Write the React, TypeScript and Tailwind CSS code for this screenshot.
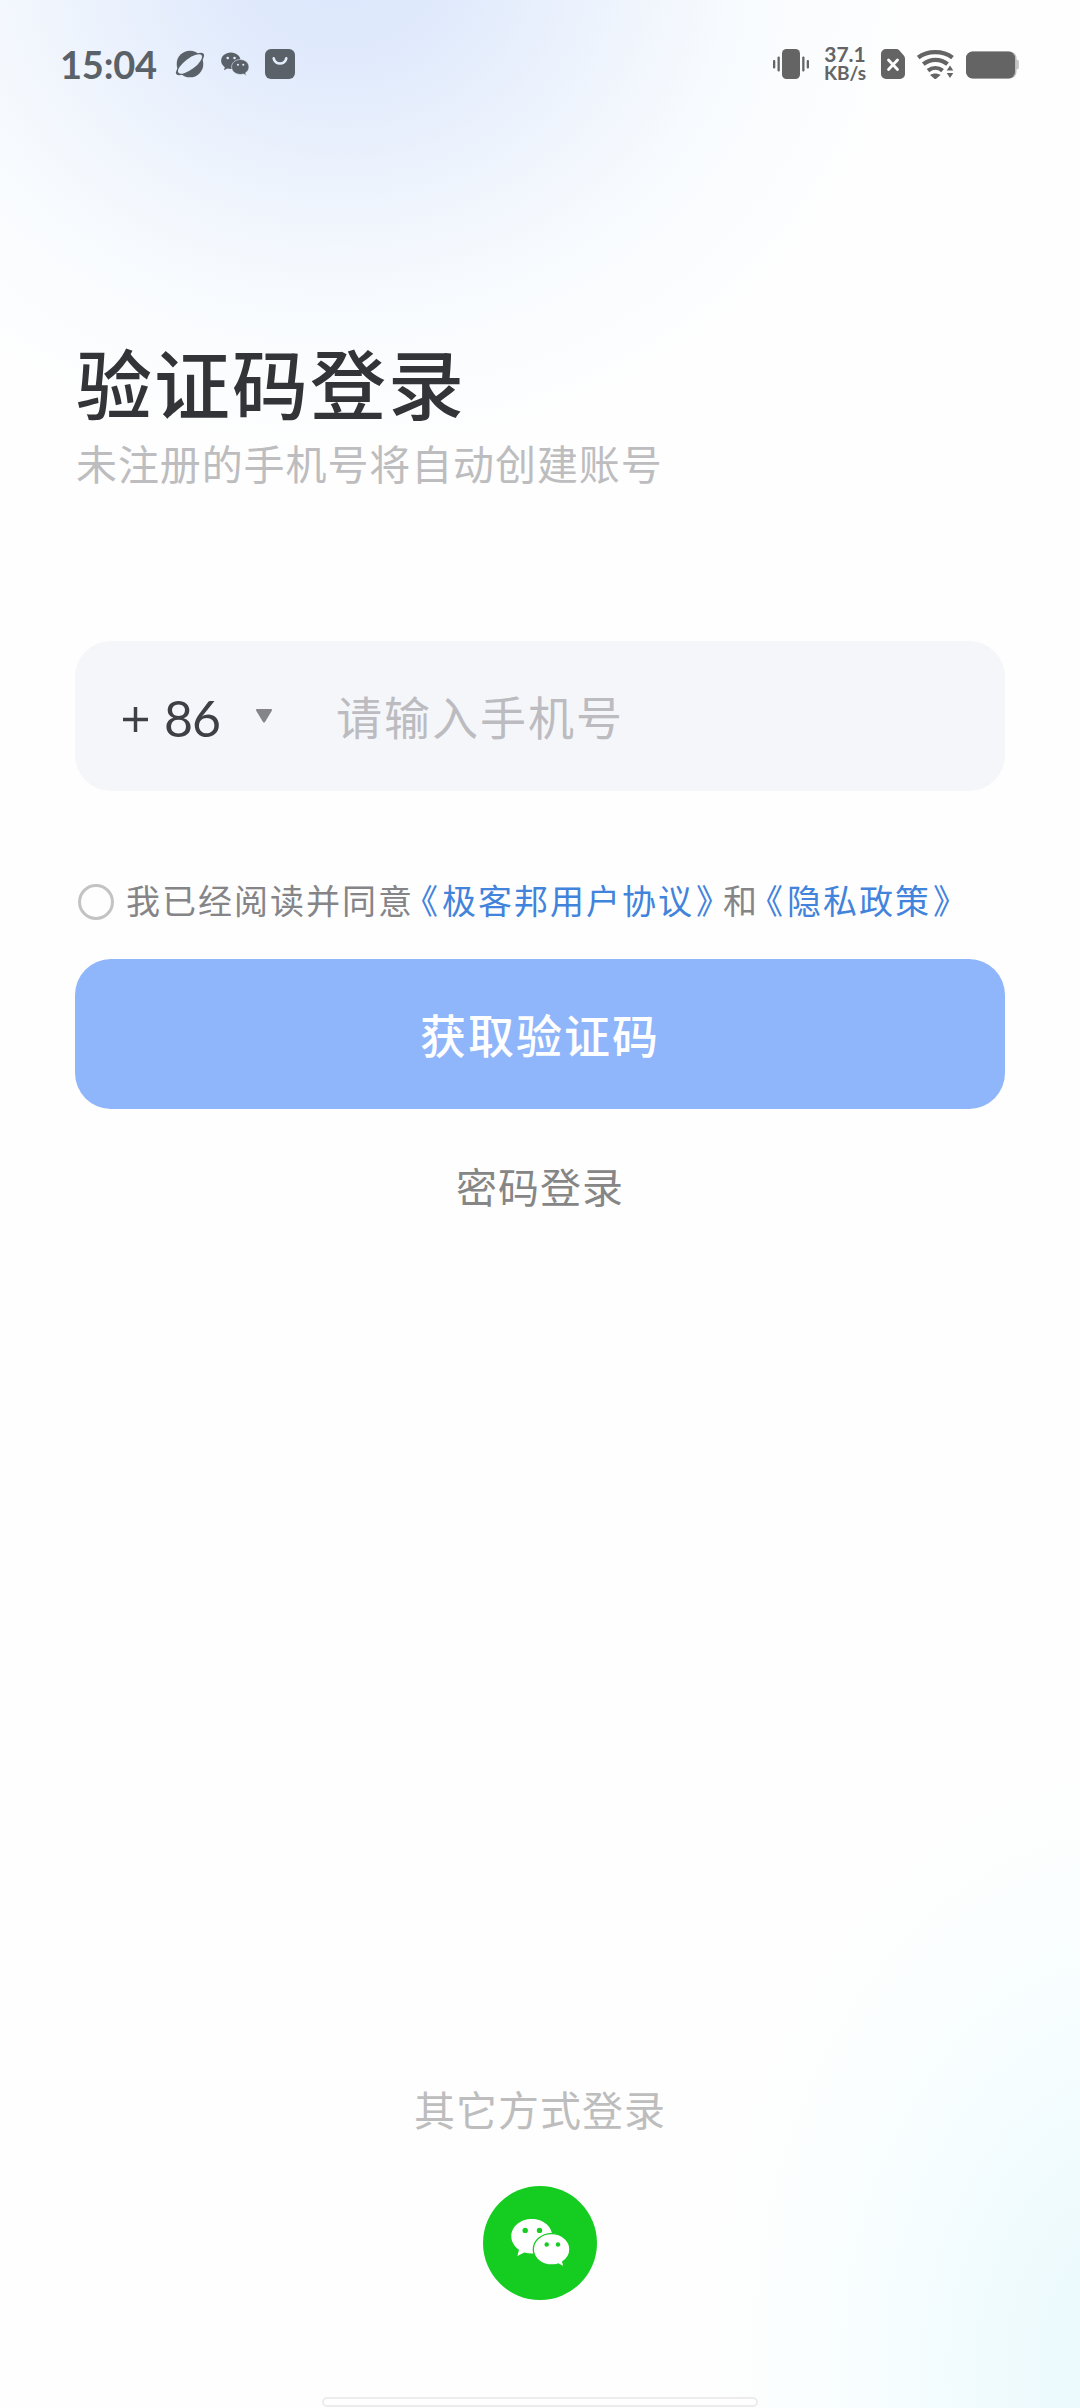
import React from 'react';

const WechatIcon: React.FC<{ className?: string; gap: string }> = ({ className, gap }) => (
  <svg viewBox="0 0 59 48" className={className}>
    <path
      fill="currentColor"
      d="M20.8 0C9.3 0 .3 7.7 .3 17.3c0 5.500 2.900 10.200 7.700 13.400L6.400 37l7-3.400c2.500.7 4.800 1 7.400 1 11.500 0 20.500-7.700 20.500-17.300S32.300 0 20.800 0Z"
    />
    <path
      fill="currentColor"
      stroke={gap}
      strokeWidth="1.300"
      d="M40.600 14.600c-10.300 0-18.300 7-18.300 15.700S30.300 46 40.600 46c2.300 0 4.500-.3 6.500-1l6.100 3-1.500-5.300c4.400-2.800 7.200-7.300 7.200-12.400 0-8.700-8-15.700-18.300-15.700Z"
    />
    <g fill={gap}>
      <circle cx="14.200" cy="11.400" r="2.700" />
      <circle cx="28.500" cy="11.400" r="2.700" />
      <circle cx="35.700" cy="25.500" r="2.200" />
      <circle cx="47" cy="25.500" r="2.200" />
    </g>
  </svg>
);

const StatusBar: React.FC = () => (
  <header className="flex h-[128px] items-center justify-between pl-[60px] pr-[61px] font-['Lato',sans-serif]">
    <div className="flex items-center text-[#5a6168]">
      <span className="w-[99px] whitespace-nowrap text-[38px] font-bold leading-[40px] tracking-[-0.2px]">15:04</span>
      {/* browser */}
      <svg viewBox="0 0 30 28" className="ml-4 h-7 w-[30px]">
        <circle cx="15" cy="14" r="13.300" fill="currentColor" />
        <ellipse cx="15" cy="14" rx="17" ry="6" transform="rotate(-37 15 14)" fill="currentColor" />
        <ellipse cx="15" cy="14" rx="14.500" ry="5.400" transform="rotate(-37 15 14)" fill="#e3edfc" />
      </svg>
      <WechatIcon className="ml-4 h-6 w-7" gap="#e3edfc" />
      {/* app store */}
      <svg viewBox="0 0 30 30" className="ml-4 size-[30px]">
        <rect width="30" height="30" rx="6" fill="currentColor" />
        <path d="M8.700 9.300c1 7 11.600 7 12.600 0" fill="none" stroke="#e3edfc" strokeWidth="2.600" strokeLinecap="round" />
      </svg>
    </div>

    <div className="flex items-center text-[#646464]">
      {/* vibrate */}
      <svg viewBox="0 0 36 30" className="h-[30px] w-9" fill="currentColor">
        <rect x="9" width="18" height="30" rx="4.500" />
        <rect x="4.500" y="7.500" width="2.300" height="15" rx="1" />
        <rect y="11" width="2.300" height="8.500" rx="1" />
        <rect x="29.200" y="7.500" width="2.300" height="15" rx="1" />
        <rect x="33.700" y="11" width="2.300" height="8.500" rx="1" />
      </svg>
      <div className="ml-[14px] w-[44px] whitespace-nowrap text-center font-bold">
        <div className="text-[21px] leading-[18px]">37.1</div>
        <div className="text-[19px] leading-[20px]">KB/s</div>
      </div>
      {/* sim */}
      <svg viewBox="0 0 24 30" className="ml-[14px] h-[30px] w-6">
        <path d="M5 0h10.500c1 0 2 .4 2.700 1.200l4.600 5.300c.8.900 1.200 1.800 1.200 3V25a5 5 0 0 1-5 5H5a5 5 0 0 1-5-5V5a5 5 0 0 1 5-5Z" fill="currentColor" />
        <path d="m7.500 11 9 9.500m0-9.500-9 9.500" stroke="#fff" strokeWidth="2.800" strokeLinecap="round" />
      </svg>
      {/* wifi */}
      <svg viewBox="0 0 37 30" className="ml-3 h-[30px] w-[37px]">
        <g fill="none" stroke="currentColor" strokeWidth="4.200">
          <path d="M1.200 8.600C10.500 1.200 26 1.200 35.500 8.600" />
          <path d="M6.300 15.200c7-5.800 17.500-5.800 24.200 0" />
          <path d="M11 21.600c4.500-3.500 10.300-3.500 14.600 0" />
        </g>
        <path d="M18.300 30.500l-5.200-4.500c3-2 7.400-2 10.400 0l-5.200 4.500Z" fill="currentColor" />
        <path d="M33 16.500l3.300 5h-6.600zM33 29l-3.300-5h6.600z" fill="currentColor" stroke="#fefefe" strokeWidth="1" paintOrder="stroke" />
      </svg>
      {/* battery */}
      <svg viewBox="0 0 53 28" className="ml-3 mt-0.5 h-7 w-[53px]">
        <path d="M49 8.500h1.500a2.500 2.500 0 0 1 2.500 2.500v5a2.500 2.500 0 0 1-2.500 2.500H49z" fill="#c9c9c9" />
        <rect x="0" y=".5" width="50.500" height="27" rx="6.500" fill="#bdbdbd" />
        <rect x="0" y=".5" width="49" height="27" rx="6.500" fill="currentColor" />
      </svg>
    </div>
  </header>
);

// title marks take less than a full em, like the system font does
const DocLink: React.FC<{ name: string }> = ({ name }) => (
  <a href="#" className="flex text-[#4283dc]">
    <span className="flex w-[28px] justify-end pr-[2px] [font-feature-settings:'halt']">《</span>
    <span>{name}</span>
    <span className="flex w-[29px] justify-start pl-[2px] [font-feature-settings:'halt']">》</span>
  </a>
);

const App: React.FC = () => {
  return (
    <div className="flex h-[2408px] w-[1080px] flex-col overflow-hidden bg-[#fefefe] bg-[radial-gradient(ellipse_580px_500px_at_340px_-40px,#dae7fb_0%,#e0eafc_20%,#edf3fd_45%,#f8fbfe_70%,transparent_100%),radial-gradient(ellipse_430px_600px_at_1140px_2370px,#e8f8fc_0%,#f0fbfd_35%,#f8feff_65%,transparent_100%)] font-['Noto_Sans_CJK_SC',sans-serif]">
      <StatusBar />

      <main className="flex flex-col px-[75px] pt-[213px]">
        <h1 className="pl-px text-[76px] font-medium leading-[80px] tracking-[2px] text-[#333438]">验证码登录</h1>
        <p className="mt-[16px] pl-px text-[41px] leading-[50px] tracking-[0.9px] text-[#bdbdbf]">未注册的手机号将自动创建账号</p>

        <div className="mt-[154px] flex h-[150px] items-center rounded-[36px] bg-[#f5f6fa] pl-[48px]">
          <button className="mt-[3px] flex w-[213px] items-center text-left font-['Lato',sans-serif] text-[50px] leading-[60px] text-[#3f3f45]">
            <svg viewBox="0 0 26 26" className="mt-1 size-[25px]">
              <path d="M13 0v26M0 13h26" stroke="currentColor" strokeWidth="3.600" />
            </svg>
            <span className="ml-[16px] w-[60px] tracking-[-1px]">86</span>
            <svg viewBox="0 0 16 14" className="mb-1 ml-[32px] h-[14px] w-4">
              <path d="M1 0h14c.9 0 1.300.9.8 1.700L9 13c-.5.800-1.500.800-2 0L.2 1.700C-.3.900.1 0 1 0Z" fill="#858589" />
            </svg>
          </button>
          <span className="mb-[3px] text-[46px] leading-[60px] tracking-[2px] text-[#bcbcc0]">请输入手机号</span>
        </div>

        <div className="mt-[93px] flex h-9 items-center pl-[3px] text-[34px] leading-[36px] tracking-[2px] text-[#858588]">
          <span className="mr-[12px] size-9 rounded-full border-[3px] border-[#c3c3c3]" />
          <div className="-mt-1 flex whitespace-nowrap">
            <span>我已经阅读并同意</span>
            <DocLink name="极客邦用户协议" />
            <span>和</span>
            <DocLink name="隐私政策" />
          </div>
        </div>

        <button className="mt-[39px] h-[150px] rounded-[36px] bg-[#8fb5fa] pb-[3px] text-[46px] font-medium leading-[60px] tracking-[2px] text-white">
          获取验证码
        </button>
        <button className="mt-[51px] self-center text-[41px] leading-[50px] tracking-[1px] text-[#868686]">密码登录</button>
      </main>

      <footer className="mt-auto flex flex-col items-center">
        <p className="text-[41px] leading-[50px] tracking-[1px] text-[#bdbdbd]">其它方式登录</p>
        <button className="mt-[53px] flex size-[114px] items-center justify-center rounded-full bg-[#15cc20] text-white">
          <WechatIcon className="h-12 w-[59px]" gap="#15cc20" />
        </button>
        <div className="mb-px mt-[97px] h-[10px] w-[436px] rounded-full border-2 border-[#ececec] bg-white" />
      </footer>
    </div>
  );
};

export default App;
